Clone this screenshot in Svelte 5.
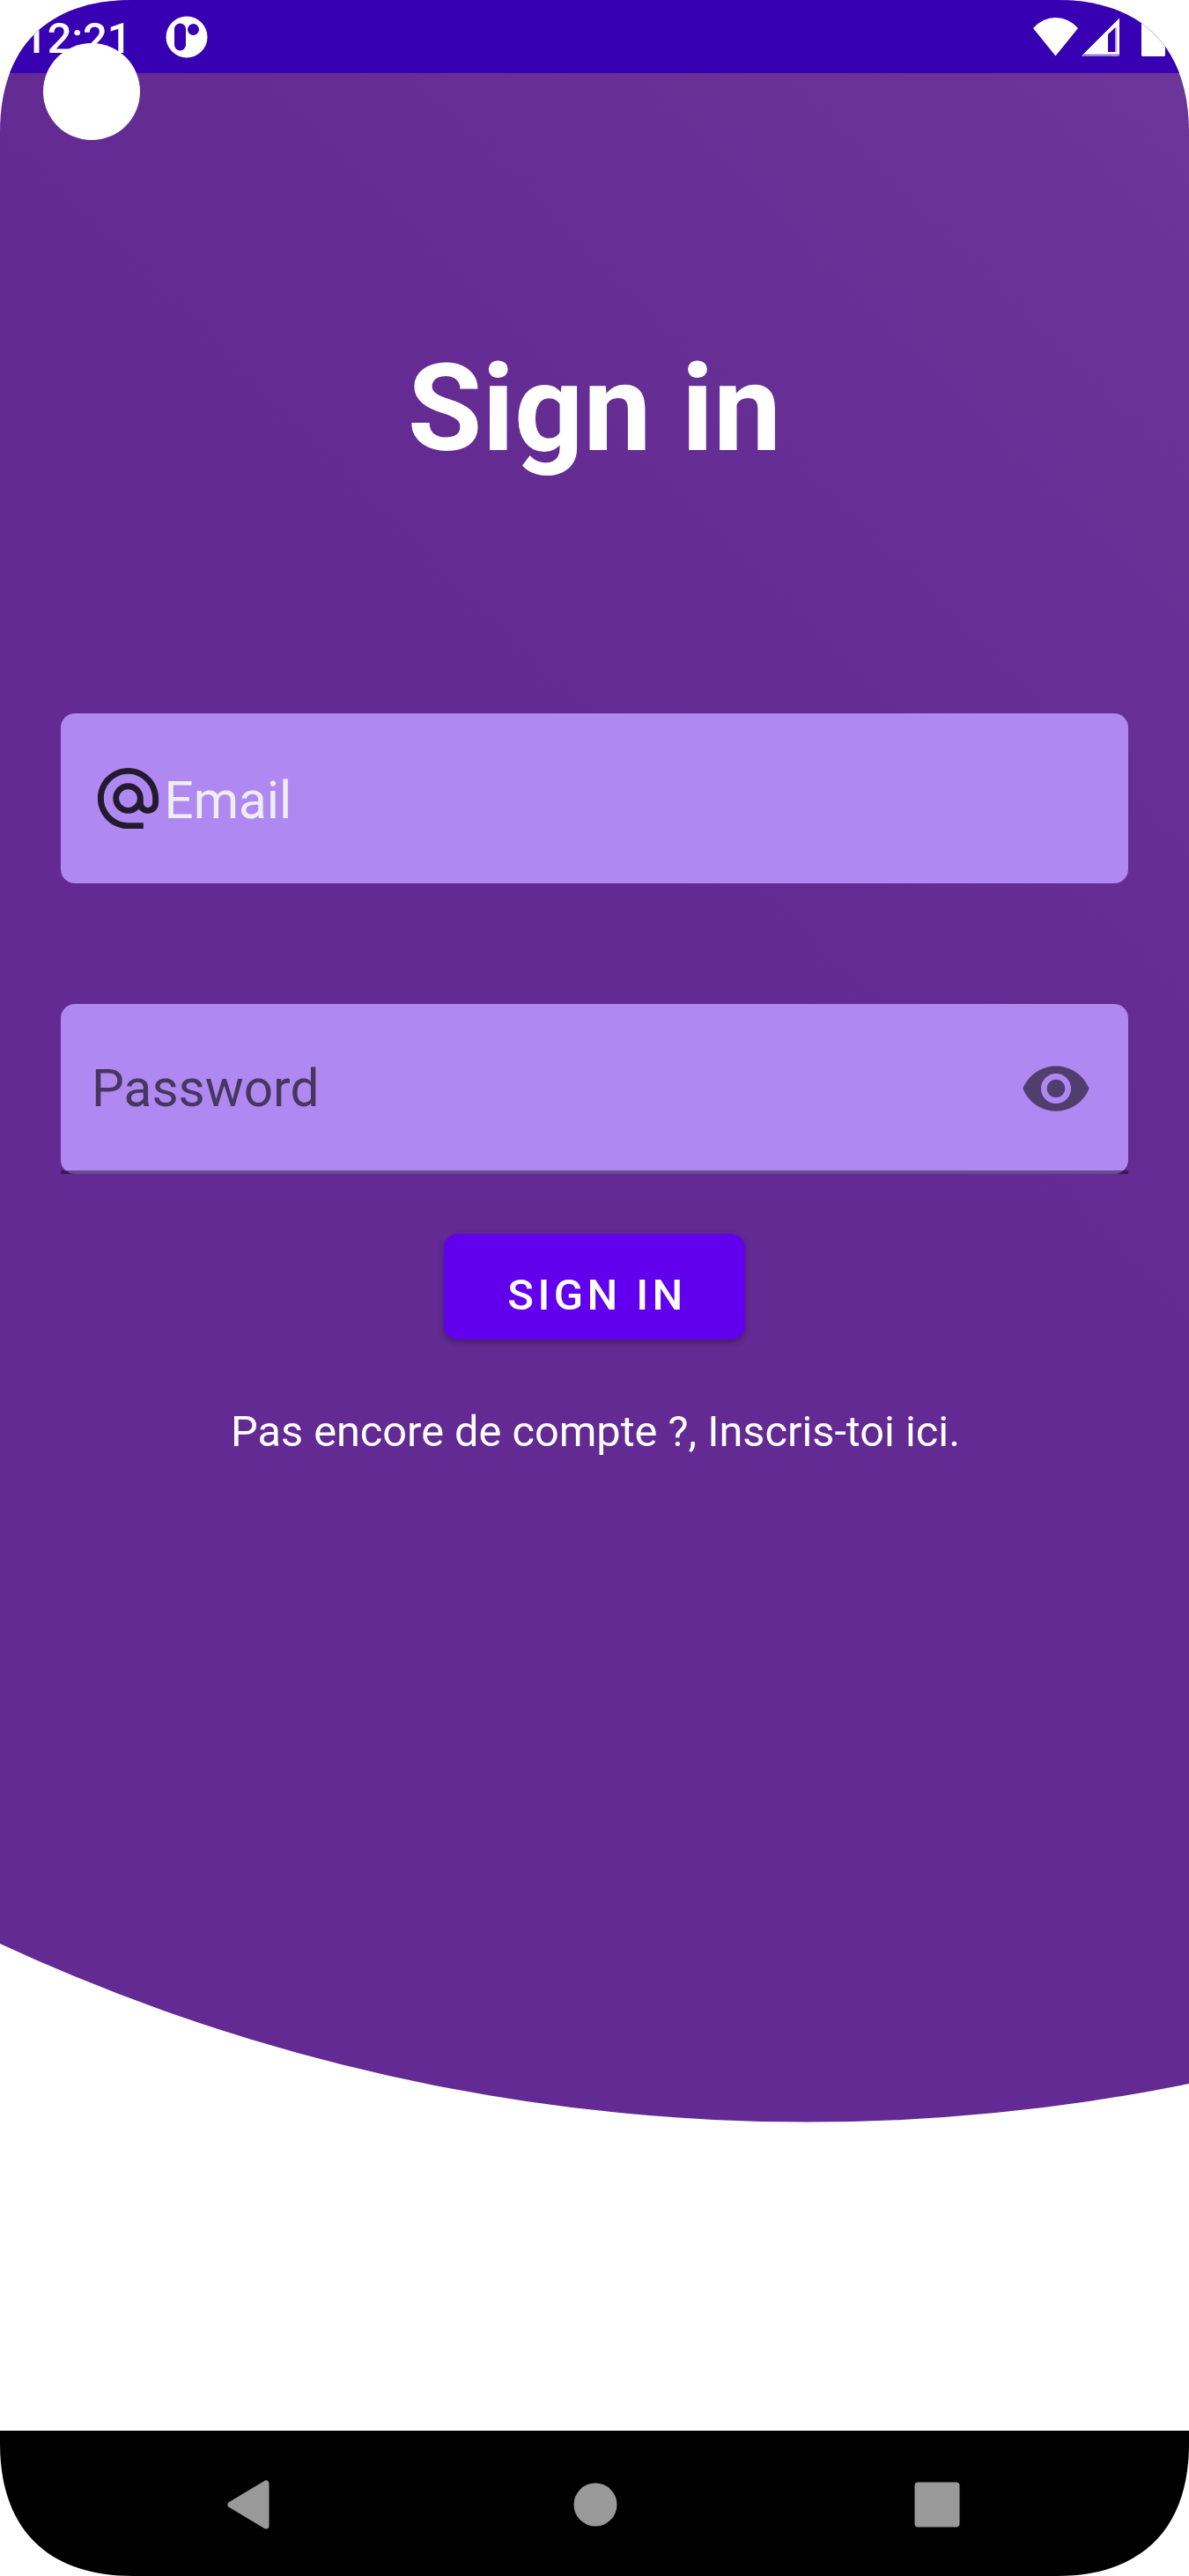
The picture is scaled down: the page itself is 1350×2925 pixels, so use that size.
<script>
  const time = '12:21';
</script>

<div class="screen">
  <svg class="backdrop" viewBox="0 0 1350 2925" aria-hidden="true">
    <defs>
      <linearGradient id="glow" gradientUnits="userSpaceOnUse" x1="-120" y1="120" x2="630" y2="-630">
        <stop offset="0" stop-color="#622a92" />
        <stop offset="1" stop-color="#6c3599" />
      </linearGradient>
    </defs>
    <circle cx="917" cy="232.5" r="2177" fill="url(#glow)" />
  </svg>

  <header class="status">
    <span class="time">{time}</span>
    <svg class="app-icon" viewBox="0 0 48 48">
      <circle cx="24" cy="24" r="23.5" fill="#fff" />
      <rect x="10" y="8.5" width="13" height="31" rx="6.5" fill="#3700b3" />
      <circle cx="31.5" cy="15.5" r="6.5" fill="#3700b3" />
    </svg>
    <svg class="signals" viewBox="0 0 150 44">
      <path d="M0 12Q11 0 25.5 0T51 12L25.5 43.5Z" fill="#fff" />
      <path d="M55 43.5 98 0.5V43.5H89.500V41.500H93.500V11L85 19V43.500Z" fill="#fff" />
      <path d="M85 39H94V43.500H85Z" fill="#fff" />
      <path d="M57 41.600H98V43.500H55Z" fill="#9b80d9" />
      <path d="M93.500 11H95.300V39H93.500Z" fill="#c3b3e8" />
      <path d="M123 0H150V42.500Q150 44 148 44H125Q123 44 123 42.500Z" fill="#fff" />
    </svg>
    <i class="camera"></i>
  </header>

  <main>
    <h1>Sign in</h1>

    <div class="field email">
      <svg class="at" viewBox="0 0 24 24">
        <path d="M12,2C6.480,2 2,6.480 2,12s4.480,10 10,10h5v-2h-5c-4.340,0 -8,-3.660 -8,-8s3.660,-8 8,-8 8,3.660 8,8v1.430c0,0.790 -0.710,1.570 -1.500,1.570s-1.500,-0.780 -1.500,-1.570L17,12c0,-2.760 -2.240,-5 -5,-5s-5,2.240 -5,5 2.240,5 5,5c1.380,0 2.640,-0.560 3.540,-1.470 0.650,0.890 1.770,1.470 2.960,1.470 1.970,0 3.500,-1.600 3.500,-3.570L22,12c0,-5.520 -4.480,-10 -10,-10zM12,15c-1.660,0 -3,-1.340 -3,-3s1.340,-3 3,-3 3,1.340 3,3 -1.340,3 -3,3z" />
      </svg>
      <span>Email</span>
    </div>

    <div class="password-wrap">
      <div class="field password">
        <span>Password</span>
        <svg class="eye" viewBox="0 0 24 24">
          <path d="M12 4.500C7 4.500 2.730 7.610 1 12c1.730 4.390 6 7.500 11 7.500s9.270-3.110 11-7.500c-1.730-4.390-6-7.500-11-7.500zM12 17c-2.760 0-5-2.240-5-5s2.240-5 5-5 5 2.240 5 5-2.240 5-5 5zm0-8c-1.660 0-3 1.340-3 3s1.340 3 3 3 3-1.340 3-3-1.340-3-3-3z" />
        </svg>
      </div>
    </div>

    <button>SIGN IN</button>
    <p>Pas encore de compte ?, Inscris-toi ici.</p>
  </main>

  <nav>
    <svg viewBox="0 0 56 60"><path d="M8 30 48 6V54Z" class="back" /></svg>
    <svg viewBox="0 0 56 60"><circle cx="31" cy="30" r="24.500" /></svg>
    <svg viewBox="0 0 56 60"><rect x="2.500" y="4.500" width="51" height="51" rx="4" /></svg>
  </nav>
</div>

<style>
  :global(body) {
    margin: 0;
    background: #fff;
  }

  .screen {
    position: relative;
    display: flex;
    flex-direction: column;
    width: 1350px;
    height: 2925px;
    overflow: hidden;
    background: #fff;
    color: #fff;
    font-family: Roboto, sans-serif;
    clip-path: path('M0 150C0 54 54 0 150 0H1200C1296 0 1350 54 1350 150V2775C1350 2871 1296 2925 1200 2925H150C54 2925 0 2871 0 2775Z');
  }

  .backdrop {
    position: absolute;
    inset: 0;
    width: 1350px;
    height: 2925px;
  }

  .status {
    position: relative;
    z-index: 1;
    display: flex;
    align-items: center;
    box-sizing: border-box;
    height: 83px;
    padding: 0 27px 0 26px;
    background: #3700b3;
  }

  .time {
    width: 162px;
    padding-top: 4px;
    font-size: 49px;
    font-weight: 500;
    letter-spacing: -0.2px;
    line-height: 79px;
    white-space: nowrap;
  }

  .app-icon {
    width: 48px;
    height: 48px;
  }

  .signals {
    width: 150px;
    height: 44px;
    margin-left: auto;
  }

  .camera {
    position: absolute;
    top: 49px;
    left: 49px;
    width: 110px;
    height: 110px;
    border-radius: 50%;
    background: #fff;
  }

  main {
    position: relative;
    display: flex;
    flex: 1;
    flex-direction: column;
    align-items: center;
    padding: 301px 69px 0;
  }

  h1 {
    margin: 0 0 266px;
    font-size: 137.5px;
    font-weight: 700;
    line-height: 160px;
  }

  .field {
    display: flex;
    align-items: center;
    box-sizing: border-box;
    width: 1212px;
    height: 193px;
    border-radius: 16px;
    background: #b088f1;
    font-size: 58.5px;
    line-height: 70px;
  }

  .email {
    margin-bottom: 137px;
    padding-left: 34.5px;
    color: #eee;
  }

  .email span {
    padding-top: 5px;
  }

  .at {
    width: 83px;
    height: 83px;
    fill: #231a30;
  }

  .password-wrap {
    position: relative;
    margin-bottom: 68px;
  }

  .password-wrap::after {
    content: '';
    position: absolute;
    right: 0;
    bottom: 0;
    left: 0;
    height: 4px;
    background: rgba(0, 0, 0, 0.42);
  }

  .password {
    justify-content: space-between;
    padding: 0 41px 1px 35px;
    color: #47365f;
  }

  .eye {
    width: 82px;
    height: 82px;
    fill: #523d6f;
  }

  button {
    width: 342px;
    height: 120px;
    padding: 20px 0 0 6px;
    border: 0;
    border-radius: 16px;
    background: #6200ee;
    box-shadow: 0 3px 6px rgba(0, 0, 0, 0.3);
    color: #fff;
    font-family: inherit;
    font-size: 49px;
    font-weight: 500;
    letter-spacing: 4.4px;
    line-height: 60px;
  }

  p {
    margin: 75px 0 0;
    padding-left: 2px;
    font-size: 48.7px;
    line-height: 60px;
    white-space: nowrap;
  }

  nav {
    position: relative;
    display: flex;
    align-items: center;
    justify-content: space-between;
    box-sizing: border-box;
    height: 165px;
    padding: 2px 258.5px 0 254px;
    background: #000;
  }

  nav svg {
    width: 56px;
    height: 60px;
    fill: #999;
  }

  .back {
    stroke: #999;
    stroke-width: 7px;
    stroke-linejoin: round;
  }
</style>
